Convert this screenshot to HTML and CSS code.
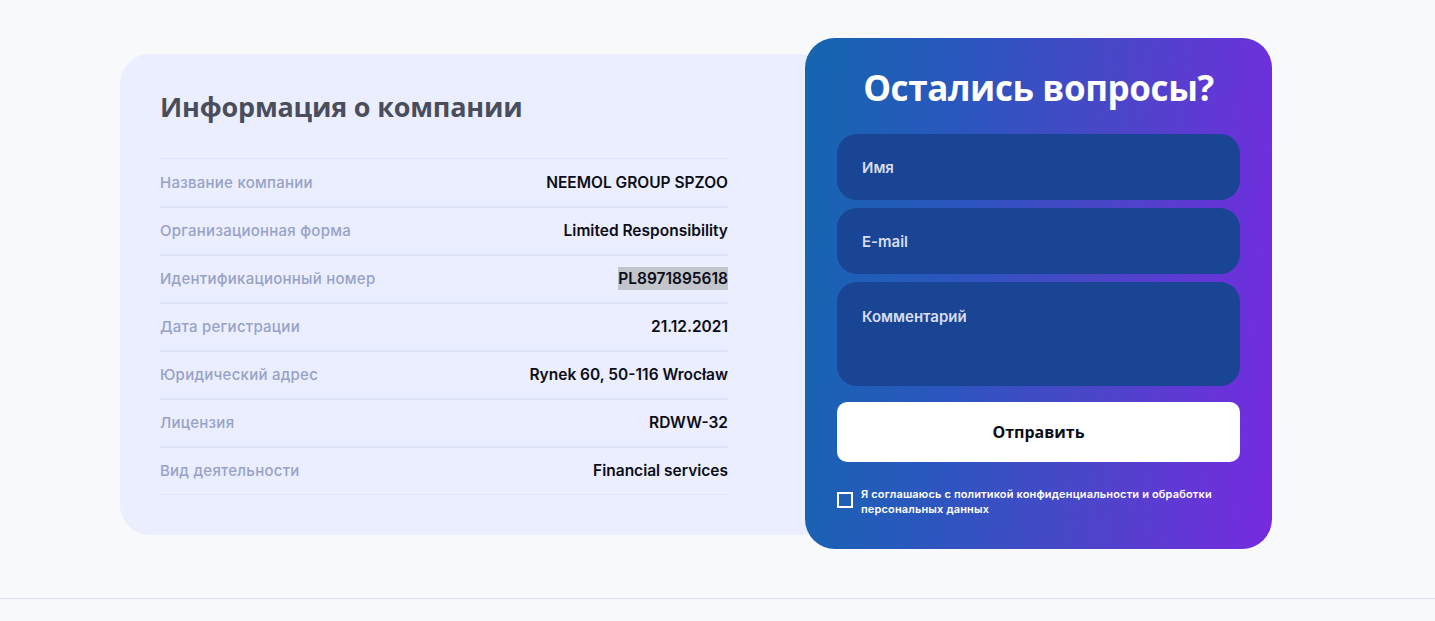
FILE: index.html
```html
<!DOCTYPE html>
<html lang="ru">
<head>
<meta charset="utf-8">
<title>Информация о компании</title>
<link rel="stylesheet" href="styles.css">
</head>
<body>
<section class="about">
  <div class="container">
    <div class="info-card">
      <h2 class="info-title">Информация о компании</h2>
      <div class="info-table">
        <div class="info-row"><span class="info-label">Название компании</span><span class="info-value">NEEMOL GROUP SPZOO</span></div>
        <div class="info-row"><span class="info-label">Организационная форма</span><span class="info-value">Limited Responsibility</span></div>
        <div class="info-row"><span class="info-label">Идентификационный номер</span><span class="info-value"><span class="selected">PL8971895618</span></span></div>
        <div class="info-row"><span class="info-label">Дата регистрации</span><span class="info-value">21.12.2021</span></div>
        <div class="info-row"><span class="info-label">Юридический адрес</span><span class="info-value">Rynek 60, 50-116 Wrocław</span></div>
        <div class="info-row"><span class="info-label">Лицензия</span><span class="info-value">RDWW-32</span></div>
        <div class="info-row"><span class="info-label">Вид деятельности</span><span class="info-value">Financial services</span></div>
      </div>
    </div>
    <form class="form-card">
      <h2 class="form-title">Остались вопросы?</h2>
      <input class="field" type="text" placeholder="Имя">
      <input class="field" type="text" placeholder="E-mail">
      <textarea class="field field-area" placeholder="Комментарий"></textarea>
      <button class="submit" type="button">Отправить</button>
      <label class="agree">
        <span class="checkbox"></span>
        <span class="agree-text">Я соглашаюсь с политикой конфиденциальности и обработки персональных данных</span>
      </label>
    </form>
  </div>
</section>
<div class="footer-line"></div>
</body>
</html>
```

FILE: styles.css
```css
* { box-sizing: border-box; }
html, body { margin: 0; padding: 0; }
body {
  background: #f8f9fb;
  font-family: Inter, "Noto Sans", sans-serif;
  height: 621px;
  overflow: hidden;
}
.about {
  height: 598px;
}
.container {
  display: flex;
  align-items: flex-start;
  padding: 38px 0 0 120px;
}
.info-card {
  width: 710px;
  margin-top: 16px;
  background: #ebeefe;
  border-radius: 30px;
  padding: 35px 102px 40px 40px;
}
.info-title {
  margin: 0 0 33px;
  font-family: "Open Sans", sans-serif;
  font-weight: 700;
  font-size: 27px;
  line-height: 36px;
  color: #4a4e5c;
  letter-spacing: -0.2px;
}
.info-table {
  border-bottom: 1px solid #dfe4f8;
}
.info-row {
  display: flex;
  justify-content: space-between;
  align-items: center;
  height: 48px;
  border-top: 2px solid #dde3f7;
  font-size: 15px;
  padding-bottom: 1px;
}
.info-row:first-child { border-top-width: 1px; }
.info-label {
  color: #97a2c7;
  font-weight: 500;
  letter-spacing: 0.25px;
}
.info-value {
  color: #0b0d17;
  font-weight: 600;
  font-size: 15.5px;
  letter-spacing: 0;
}
.selected {
  background: #c3c5cc;
  padding: 2px 0;
}
.form-card {
  position: relative;
  width: 467px;
  margin: 0 0 0 -25px;
  padding: 26px 32px 32px;
  border-radius: 30px;
  background: linear-gradient(95deg, #1466b0 0%, #2c56bf 33%, #4a46c8 62%, #772ae1 100%);
  display: flex;
  flex-direction: column;
}
.form-title {
  margin: 0 0 22px;
  text-align: center;
  font-family: "Open Sans", sans-serif;
  font-weight: 700;
  font-size: 35px;
  line-height: 48px;
  color: #ffffff;
  letter-spacing: -0.4px;
}
.field {
  display: block;
  width: 100%;
  height: 66px;
  margin: 0 0 8px;
  border: none;
  outline: none;
  border-radius: 20px;
  background: #1a4594;
  padding: 0 25px;
  font-family: Inter, sans-serif;
  font-size: 15px;
  font-weight: 600;
  color: #dfe4f6;
}
.field::placeholder {
  color: #d7ddf1;
  opacity: 1;
}
.field-area {
  height: 104px;
  padding-top: 25px;
  line-height: 20px;
  resize: none;
  margin-bottom: 16px;
}
.submit {
  height: 60px;
  width: 100%;
  border: none;
  border-radius: 10px;
  background: #ffffff;
  font-family: "Open Sans", sans-serif;
  font-weight: 700;
  font-size: 16px;
  color: #0b0d17;
  cursor: pointer;
}
.agree {
  display: flex;
  align-items: flex-start;
  gap: 8px;
  margin-top: 25px;
}
.checkbox {
  flex: none;
  width: 16px;
  height: 16px;
  margin-top: 5px;
  border: 2px solid #ffffff;
}
.agree-text {
  font-size: 11px;
  line-height: 15px;
  font-weight: 600;
  letter-spacing: 0.15px;
  color: #ffffff;
  padding-right: 12px;
}
.footer-line {
  height: 1px;
  background: #d9e0f5;
}
```
